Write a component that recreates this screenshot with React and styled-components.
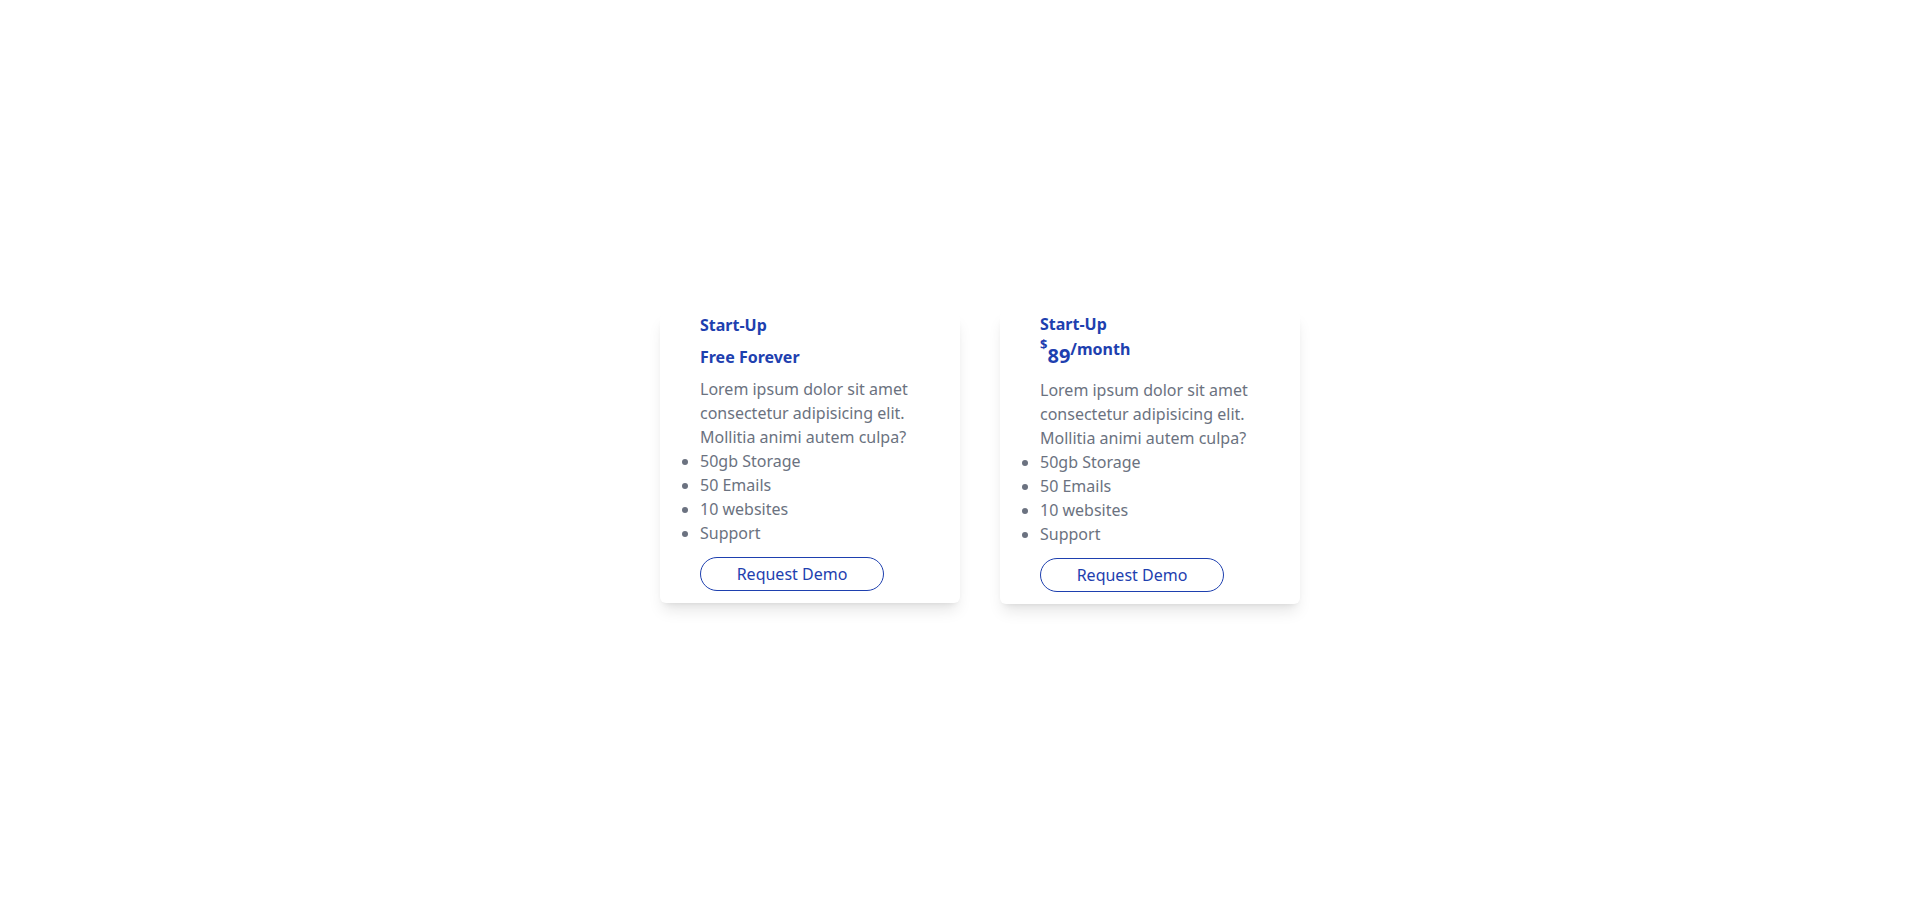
import React from "react";
import styled, { createGlobalStyle } from "styled-components";

const Global = createGlobalStyle`
  html, body { margin: 0; padding: 0; background: #ffffff; }
  body { font-family: "Noto Sans", "Open Sans", sans-serif; }
  * { box-sizing: border-box; }
`;

const Page = styled.main`
  height: 100vh;
  padding: 6px 0 0 40px;
  display: flex;
  justify-content: center;
  align-items: center;
  gap: 40px;
`;

const Card = styled.section`
  width: 300px;
  background: #ffffff;
  border-radius: 6px;
  padding: ${(p) => (p.$priced ? "1px" : "0")} 40px 12px;
  box-shadow: 0 10px 15px -3px rgba(0, 0, 0, 0.1), 0 4px 6px -4px rgba(0, 0, 0, 0.1);
  color: #6b7280;
  font-size: 16px;
  line-height: 24px;
`;

const Title = styled.h3`
  margin: 0;
  font-size: 16px;
  line-height: 24px;
  font-weight: 700;
  color: #1e40af;
`;

const Plan = styled.h2`
  margin: 8px 0 0;
  font-size: 16px;
  line-height: 24px;
  font-weight: 700;
  color: #1e40af;
`;

const Price = styled.div`
  margin: 1px 0 0;
  font-size: 16px;
  line-height: 24px;
  font-weight: 700;
  color: #1e40af;
`;

const Dollar = styled.span`
  font-size: 13px;
  line-height: 0;
  vertical-align: 6px;
`;

const Amount = styled.span`
  font-size: 20px;
  line-height: 0;
  vertical-align: -8px;
`;

const Text = styled.p`
  margin: ${(p) => (p.$priced ? "17px" : "8px")} 0 0;
`;

const Features = styled.ul`
  margin: 0;
  padding: 0;
  list-style: disc outside;
`;

const Button = styled.button`
  margin-top: 12px;
  width: 184px;
  height: 34px;
  border: 1px solid #1e40af;
  border-radius: 17px;
  background: #ffffff;
  color: #1e40af;
  font-family: "Noto Sans", "Open Sans", sans-serif;
  font-size: 16px;
  line-height: 24px;
  padding: 0;
  display: block;
  cursor: pointer;
`;

const features = ["50gb Storage", "50 Emails", "10 websites", "Support"];

function PlanCard({ priced }) {
  return (
    <Card $priced={priced}>
      <Title>Start-Up</Title>
      {priced ? (
        <Price>
          <Dollar>$</Dollar>
          <Amount>89</Amount>/month
        </Price>
      ) : (
        <Plan>Free Forever</Plan>
      )}
      <Text $priced={priced}>
        Lorem ipsum dolor sit amet consectetur adipisicing elit. Mollitia animi autem culpa?
      </Text>
      <Features>
        {features.map((f) => (
          <li key={f}>{f}</li>
        ))}
      </Features>
      <Button>Request Demo</Button>
    </Card>
  );
}

export default function App() {
  return (
    <>
      <Global />
      <Page>
        <PlanCard />
        <PlanCard priced />
      </Page>
    </>
  );
}
